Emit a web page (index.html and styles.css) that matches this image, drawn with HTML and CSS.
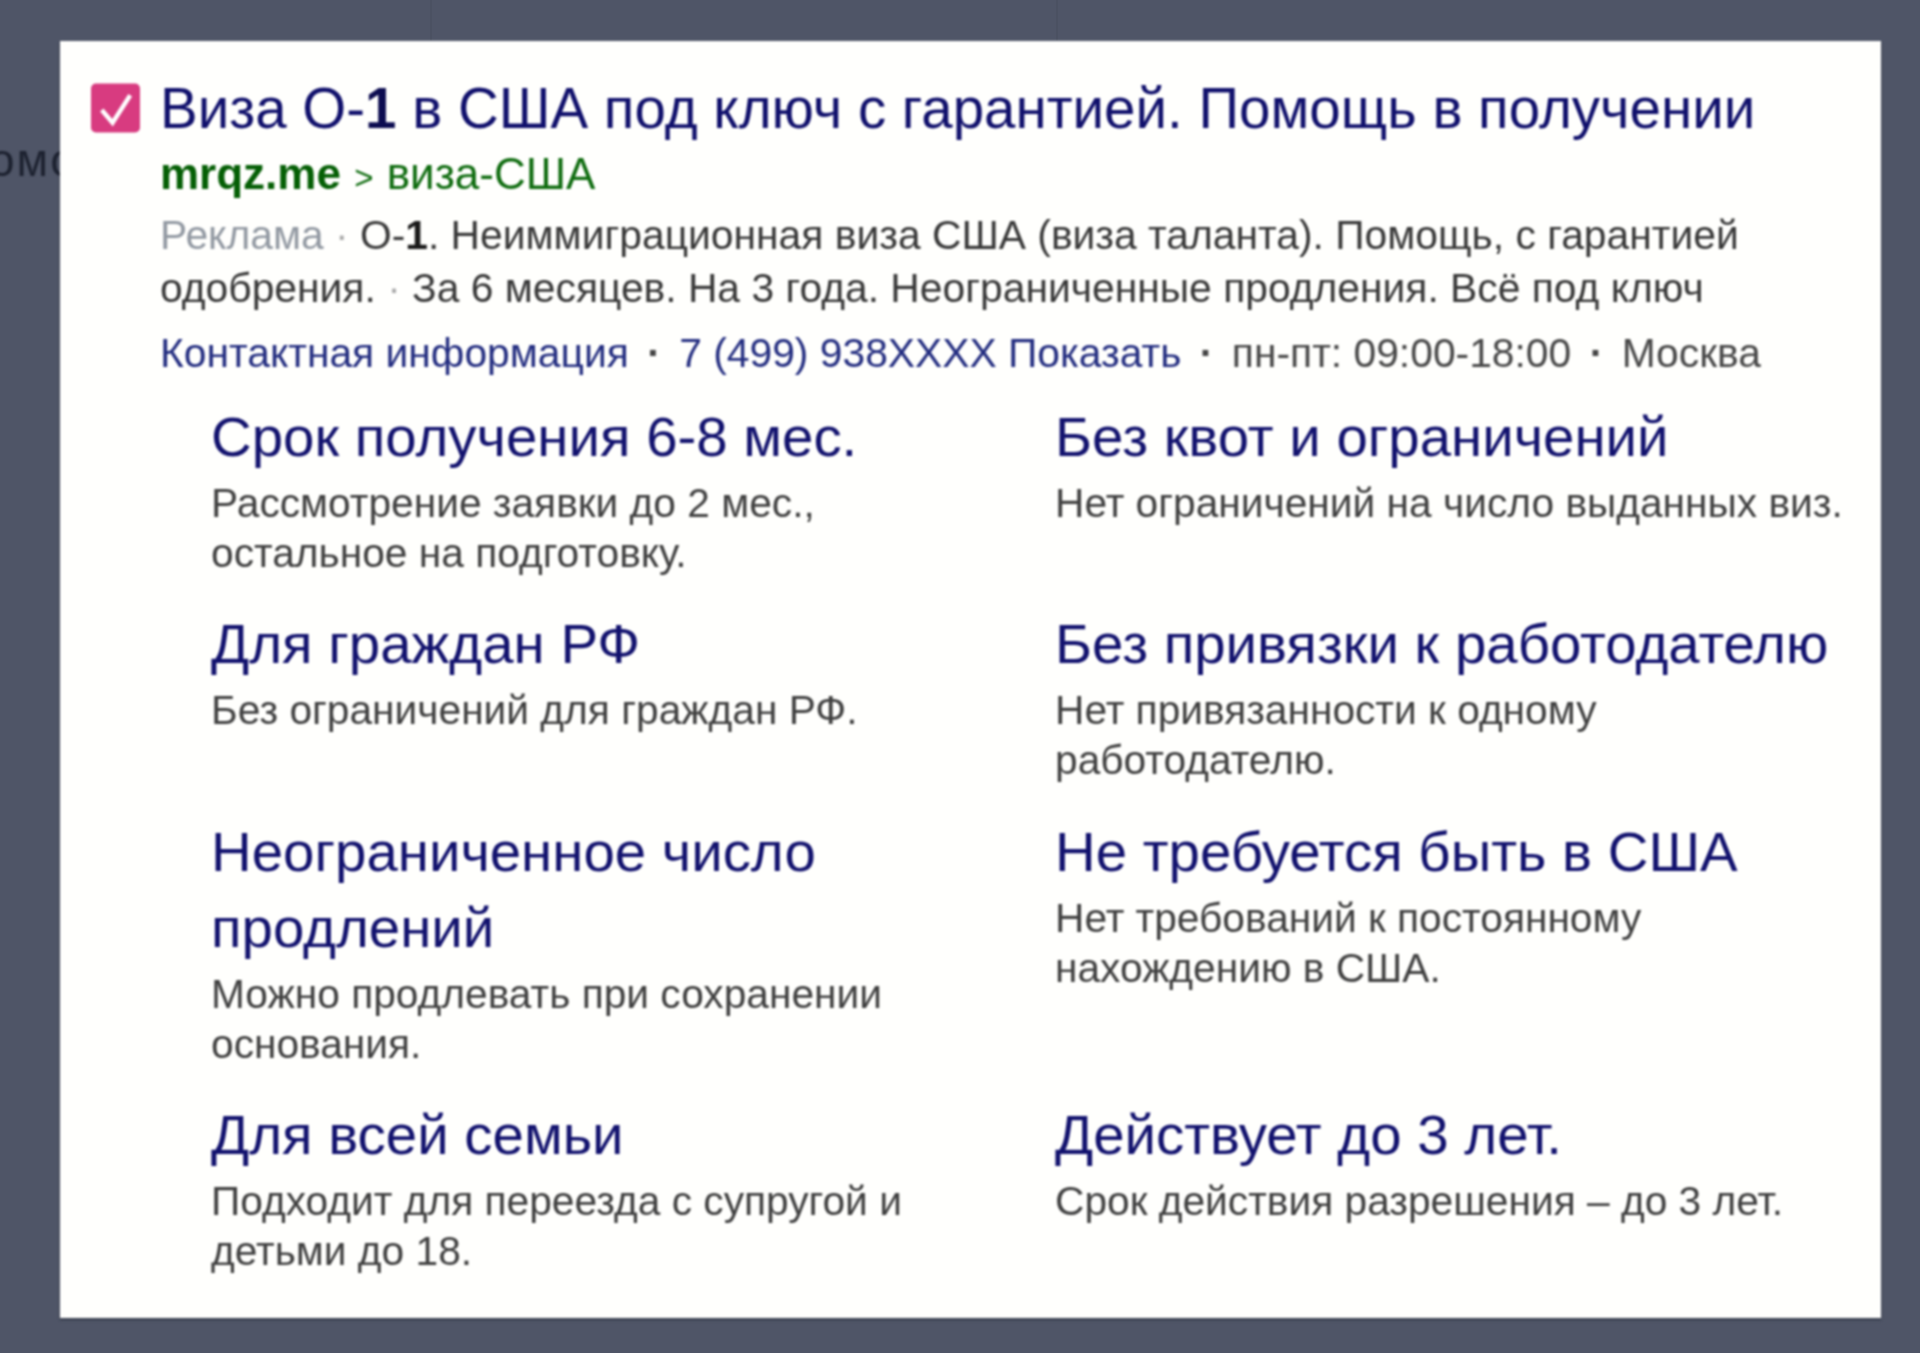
FILE: index.html
```html
<!DOCTYPE html>
<html lang="ru">
<head>
    <meta charset="UTF-8">
    <meta name="viewport" content="width=device-width, initial-scale=1.0">
    <title>Виза О-1 в США</title>
    <link rel="stylesheet" href="styles.css">
</head>
<body>
    <div class="behind-text">омощь</div>
    <div class="seam seam-left"></div>
    <div class="seam seam-right"></div>

    <div class="card">
        <div class="ad-head">
            <svg class="ad-icon" viewBox="0 0 50 50" aria-hidden="true">
                <rect width="50" height="50" rx="5" fill="#d83b80"/>
                <path d="M11 27 L22 40 L40 12" fill="none" stroke="#fff" stroke-width="4.5"/>
            </svg>
            <div class="ad-main">
                <h1 class="ad-title">Виза О-<b>1</b> в США под ключ с гарантией. Помощь в получении</h1>
                <div class="ad-url"><b>mrqz.me</b> <span class="crumb">&gt;</span> виза-США</div>
                <p class="ad-text"><span class="ad-label">Реклама</span> <span class="dot">·</span> О-<b>1</b>. Неиммиграционная виза США (виза таланта). Помощь, с гарантией<br>одобрения. <span class="dot">·</span> За 6 месяцев. На 3 года. Неограниченные продления. Всё под ключ</p>
                <div class="ad-contacts">
                    <span class="link">Контактная информация</span>
                    <span class="sep">·</span>
                    <span class="link">7 (499) 938ХХХХ Показать</span>
                    <span class="sep">·</span>
                    <span>пн-пт: 09:00-18:00</span>
                    <span class="sep">·</span>
                    <span>Москва</span>
                </div>
            </div>
        </div>

        <div class="sitelinks">
            <div class="sitelink">
                <h2>Срок получения 6-8 мес.</h2>
                <p>Рассмотрение заявки до 2 мес.,<br>остальное на подготовку.</p>
            </div>
            <div class="sitelink">
                <h2>Без квот и ограничений</h2>
                <p>Нет ограничений на число выданных виз.</p>
            </div>
            <div class="sitelink">
                <h2>Для граждан РФ</h2>
                <p>Без ограничений для граждан РФ.</p>
            </div>
            <div class="sitelink">
                <h2>Без привязки к работодателю</h2>
                <p>Нет привязанности к одному<br>работодателю.</p>
            </div>
            <div class="sitelink">
                <h2>Неограниченное число<br>продлений</h2>
                <p>Можно продлевать при сохранении<br>основания.</p>
            </div>
            <div class="sitelink">
                <h2>Не требуется быть в США</h2>
                <p>Нет требований к постоянному<br>нахождению в США.</p>
            </div>
            <div class="sitelink">
                <h2>Для всей семьи</h2>
                <p>Подходит для переезда с супругой и<br>детьми до 18.</p>
            </div>
            <div class="sitelink">
                <h2>Действует до 3 лет.</h2>
                <p>Срок действия разрешения – до 3 лет.</p>
            </div>
        </div>
    </div>
</body>
</html>
```

FILE: styles.css
```css
html, body {
    height: 100%;
}
body {
    margin: 0;
    overflow: hidden;
    background-color: #4f5567;
    font-family: "Liberation Sans", Arial, sans-serif;
}
.behind-text {
    position: absolute;
    left: -11px;
    top: 138px;
    font-size: 46px;
    letter-spacing: 2px;
    line-height: 44px;
    color: #1d2230;
    filter: blur(1px);
}
.seam {
    position: absolute;
    top: 0;
    width: 2px;
    height: 41px;
    background-color: #4b5162;
}
.seam-left {
    left: 430px;
}
.seam-right {
    left: 1056px;
}
.card {
    position: relative;
    box-sizing: border-box;
    width: 1821px;
    height: 1277px;
    margin: 41px 0 0 60px;
    padding: 36px 30px 0 31px;
    background-color: #fffffd;
    box-shadow: 0 2px 2px rgba(30, 35, 50, 0.5);
    filter: blur(0.8px);
}
.ad-head {
    display: flex;
    gap: 20px;
}
.ad-icon {
    flex: none;
    width: 49px;
    height: 50px;
    margin-top: 6px;
}
.ad-title {
    margin: 0;
    font-size: 56.5px;
    font-weight: normal;
    line-height: 64px;
    color: #10106c;
}
.ad-title b {
    color: #0c0c50;
}
.ad-url {
    margin-top: 9px;
    font-size: 44px;
    line-height: 48px;
    color: #0f6c0f;
}
.ad-url b {
    color: #055f05;
}
.crumb {
    margin: 0 1px;
    font-size: 33px;
}
.ad-text {
    margin: 7px 0 0;
    font-size: 40.8px;
    line-height: 53px;
    color: #383838;
}
.ad-text b {
    color: #1a1a1a;
}
.ad-label {
    color: #9299a2;
}
.dot {
    color: #aaa;
}
.ad-contacts {
    display: flex;
    gap: 18.4px;
    margin-top: 12px;
    font-size: 40.8px;
    line-height: 53px;
    color: #484848;
}
.link {
    color: #232d80;
}
.sep {
    font-weight: bold;
    color: #444;
}
.sitelinks {
    display: grid;
    grid-template-columns: 844px 1fr;
    row-gap: 28.4px;
    margin: 19px 0 0 120px;
}
.sitelink h2 {
    margin: 0;
    font-size: 56.4px;
    font-weight: normal;
    line-height: 76px;
    color: #12126e;
}
.sitelink p {
    margin: 3px 0 0;
    font-size: 40.7px;
    line-height: 50px;
    color: #404040;
}
```
